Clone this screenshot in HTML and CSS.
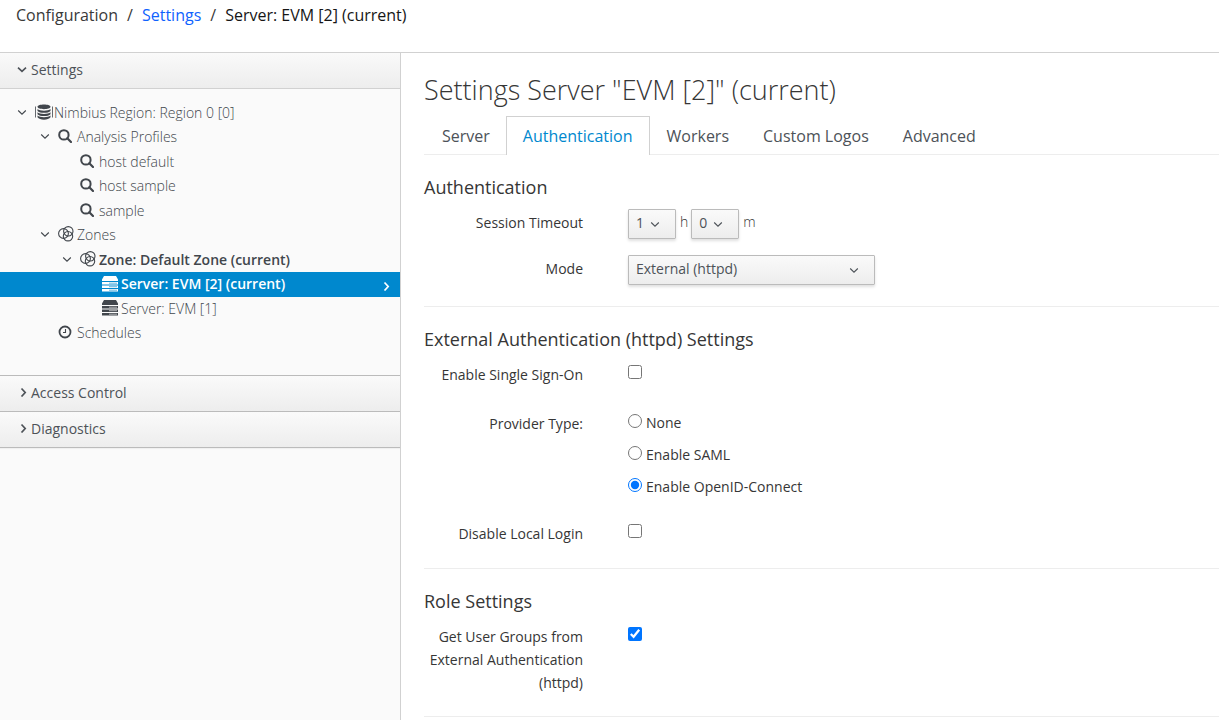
FILE: index.html
```html
<!DOCTYPE html>
<html lang="en">
<head>
<meta charset="utf-8">
<title>Settings Server</title>
<link rel="stylesheet" href="styles.css">
</head>
<body>
<svg class="defs" aria-hidden="true">
  <symbol id="down" viewBox="0 0 10 10"><path d="M1.200 3.500 5 7.200 8.800 3.500" fill="none" stroke="currentColor" stroke-width="1.100"/></symbol>
  <symbol id="down-bold" viewBox="0 0 10 10"><path d="M1 3.600 5 7.400 9 3.600" fill="none" stroke="currentColor" stroke-width="1.600"/></symbol>
  <symbol id="right" viewBox="0 0 10 10"><path d="M3.500 1.500 7.200 5.500 3.500 9.500" fill="none" stroke="currentColor" stroke-width="1.700"/></symbol>
  <symbol id="search" viewBox="0 0 14 14"><circle cx="5.900" cy="5.900" r="4.700" fill="none" stroke="currentColor" stroke-width="2"/><path d="m9.300 9.300 3.700 3.700" stroke="currentColor" stroke-width="2.200" stroke-linecap="round"/></symbol>
  <symbol id="region" viewBox="0 0 18 16"><path d="M.5 2.500v11M17.500 2.500v11" stroke="currentColor" stroke-width="1" opacity=".8"/><path d="M2.500 2.800C2.500-.4 15.500-.4 15.500 2.800S2.500 6 2.500 2.800M2.500 5c2 2.200 11 2.200 13 0v1.900c-2 2.500-11 2.500-13 0zM2.500 8.300c2 2.200 11 2.200 13 0v1.900c-2 2.500-11 2.500-13 0zM2.500 11.600c2 2.200 11 2.200 13 0v1.700c-2 3.200-11 3.200-13 0z" fill="currentColor"/></symbol>
  <symbol id="zone" viewBox="0 0 16 16"><g fill="none" stroke="currentColor" stroke-width="1.100"><circle cx="5.500" cy="7.500" r="4.900"/><circle cx="10.300" cy="5.300" r="4.700"/><circle cx="10" cy="10.200" r="4.700"/></g></symbol>
  <symbol id="server" viewBox="0 0 16 16"><path d="M2 0h12l2 3.500V5H0V3.500zM0 6h16v2.500H0zM0 9.500h16V12H0zM0 13h16v2.500H0z" fill="currentColor"/><path d="M7 7.200h8M7 10.700h8M7 14.200h8" stroke="var(--slot)" stroke-width="1" opacity=".6"/></symbol>
  <symbol id="clock" viewBox="0 0 14 14"><circle cx="7" cy="7" r="5.500" fill="none" stroke="currentColor" stroke-width="1.800"/><path d="M7.500 4v3.500H5" fill="none" stroke="currentColor" stroke-width="1.100"/></symbol>
</svg>

<nav class="breadcrumb" aria-label="Breadcrumb">
  <span>Configuration</span><span class="sep">/</span><a href="#">Settings</a><span class="sep">/</span><span class="here">Server: EVM [2] (current)</span>
</nav>

<div class="layout">
  <aside class="sidebar">
    <button class="panel-head first" type="button" aria-expanded="true"><svg class="caret"><use href="#down-bold"/></svg>Settings</button>
    <ul class="tree">
      <li class="node l1"><svg class="caret"><use href="#down"/></svg><svg class="icon wide"><use href="#region"/></svg>Nimbius Region: Region 0 [0]</li>
      <li class="node l2"><svg class="caret"><use href="#down"/></svg><svg class="icon"><use href="#search"/></svg>Analysis Profiles</li>
      <li class="node l3"><span class="caret"></span><svg class="icon"><use href="#search"/></svg>host default</li>
      <li class="node l3"><span class="caret"></span><svg class="icon"><use href="#search"/></svg>host sample</li>
      <li class="node l3"><span class="caret"></span><svg class="icon"><use href="#search"/></svg>sample</li>
      <li class="node l2"><svg class="caret"><use href="#down"/></svg><svg class="icon big"><use href="#zone"/></svg>Zones</li>
      <li class="node l3 strong"><svg class="caret"><use href="#down"/></svg><svg class="icon big"><use href="#zone"/></svg>Zone: Default Zone (current)</li>
      <li class="node l4 strong selected"><span class="caret"></span><svg class="icon big"><use href="#server"/></svg>Server: EVM [2] (current)<svg class="caret go"><use href="#right"/></svg></li>
      <li class="node l4"><span class="caret"></span><svg class="icon big"><use href="#server"/></svg>Server: EVM [1]</li>
      <li class="node l2"><span class="caret"></span><svg class="icon"><use href="#clock"/></svg>Schedules</li>
    </ul>
    <button class="panel-head closed" type="button"><svg class="caret"><use href="#right"/></svg>Access Control</button>
    <button class="panel-head closed last" type="button"><svg class="caret"><use href="#right"/></svg>Diagnostics</button>
  </aside>

  <main class="content">
    <h1>Settings Server "EVM [2]" (current)</h1>
    <div class="tabs">
      <a href="#" class="tab">Server</a>
      <a href="#" class="tab active">Authentication</a>
      <a href="#" class="tab">Workers</a>
      <a href="#" class="tab">Custom Logos</a>
      <a href="#" class="tab">Advanced</a>
    </div>

    <form>
      <section>
        <h3>Authentication</h3>
        <div class="rows tight">
          <div class="row">
            <label class="name" for="hours">Session Timeout</label>
            <div class="field timeout">
              <span class="select short"><select id="hours"><option>1</option></select><svg class="caret"><use href="#down"/></svg></span>
              <span class="unit">h</span>
              <span class="select short"><select aria-label="Minutes"><option>0</option></select><svg class="caret"><use href="#down"/></svg></span>
              <span class="unit">m</span>
            </div>
          </div>
          <div class="row">
            <label class="name" for="mode">Mode</label>
            <div class="field"><span class="select long"><select id="mode"><option>External (httpd)</option></select><svg class="caret"><use href="#down"/></svg></span></div>
          </div>
        </div>
      </section>

      <section>
        <h3>External Authentication (httpd) Settings</h3>
        <div class="rows">
          <div class="row">
            <label class="name" for="sso">Enable Single Sign-On</label>
            <div class="field"><input type="checkbox" id="sso"></div>
          </div>
          <div class="row" role="radiogroup" aria-labelledby="provider">
            <span class="name" id="provider">Provider Type:</span>
            <div class="field radios">
              <label><input type="radio" name="provider">None</label>
              <label><input type="radio" name="provider">Enable SAML</label>
              <label><input type="radio" name="provider" checked>Enable OpenID-Connect</label>
            </div>
          </div>
          <div class="row">
            <label class="name" for="local">Disable Local Login</label>
            <div class="field"><input type="checkbox" id="local"></div>
          </div>
        </div>
      </section>

      <section>
        <h3>Role Settings</h3>
        <div class="rows">
          <div class="row">
            <label class="name" for="groups">Get User Groups from External Authentication (httpd)</label>
            <div class="field"><input type="checkbox" id="groups" checked></div>
          </div>
        </div>
      </section>
    </form>
  </main>
</div>
</body>
</html>
```
FILE: styles.css
```css
* { box-sizing: border-box; }

body {
  margin: 0;
  height: 100vh;
  overflow: hidden;
  display: flex;
  flex-direction: column;
  background: #fff;
  color: #363636;
  font: 300 14px/23px "Open Sans", sans-serif;
}

.defs { position: absolute; width: 0; height: 0; }

a { text-decoration: none; }

button, select { font: inherit; color: inherit; }

.breadcrumb {
  flex: none;
  height: 52px;
  padding: 4px 16px;
  font-size: 16px;
  font-weight: 400;
  color: #393939;
}
.breadcrumb a { color: #0f62fe; }
.breadcrumb .sep { padding: 0 9px; }
.breadcrumb .here { color: #161616; }

.layout {
  flex: 1;
  min-height: 0;
  display: flex;
  border-top: 1px solid #d1d1d1;
}

.sidebar {
  flex: 0 0 401px;
  background: #fafafa;
  border-right: 1px solid #d1d1d1;
}

.caret { flex: none; width: 10px; height: 10px; }

.panel-head {
  display: flex;
  align-items: center;
  gap: 4px;
  width: 100%;
  height: 36px;
  padding: 0 17px 3px;
  border: 0;
  border-top: 1px solid #bbb;
  background: linear-gradient(#fafafa, #ededed);
  color: #4d5258;
  font-weight: 500;
}
.panel-head.first { border-top: 0; border-bottom: 1px solid #d1d1d1; }
.panel-head.closed { gap: 3px; padding-left: 18px; }
.panel-head.last { height: 37px; border-bottom: 1px solid #bbb; box-shadow: 0 1px 1px #0000000a; }

.tree {
  margin: 0;
  padding: 12px 0 29px;
  list-style: none;
  color: #41464c;
}
.node {
  display: flex;
  align-items: center;
  height: 24px;
  padding-bottom: 2px;
  --slot: #fafafa;
}
.node:nth-child(even) { margin-bottom: 1px; }
.l1 { padding-left: 17px; }
.l2 { padding-left: 40px; }
.l3 { padding-left: 62px; }
.l4 { padding-left: 84px; }
.icon { flex: none; width: 14px; height: 14px; margin: 0 5px 0 8px; }
.icon.wide { width: 18px; height: 16px; margin: 0 1px 0 8px; }
.icon.big { width: 16px; height: 16px; margin: 0 3px 0 8px; }
.strong { font-weight: 600; }
.node.selected { height: 25px; margin: 0; background: #0088ce; color: #fff; --slot: #0088ce; }
.go { margin: 4px 9px 0 auto; }

.content {
  flex: 1;
  min-width: 0;
  padding: 20px 0 0 23px;
}

h1 {
  margin: 0;
  font-size: 27px;
  font-weight: 300;
  line-height: 34px;
}

.tabs {
  display: flex;
  height: 39px;
  margin-top: 9px;
  border-bottom: 1px solid #ededed;
}
.tab {
  height: 39px;
  padding: 7px 16px;
  border: 1px solid transparent;
  border-bottom: 0;
  font-size: 16px;
  font-weight: 400;
  line-height: 24px;
  color: #4d5258;
}
.tab:first-child { padding-left: 17px; padding-right: 15px; }
.tab.active { background: #fff; border-color: #d1d1d1; color: #0088ce; }

section { padding: 20px 0; border-bottom: 1px solid #ededed; }

h3 { margin: 0 0 9px; font-size: 18px; font-weight: 400; line-height: 24px; }

.rows { display: flex; flex-direction: column; gap: 20px; }
.rows.tight { gap: 14px; }
.row { display: flex; gap: 45px; min-height: 29px; }
.name { flex: none; width: 159px; padding: 3px 0 2px; text-align: right; font-weight: 500; }
.field { flex: 1; }
.tight .field { padding: 1px 0; }
.timeout { display: flex; gap: 3px; }
.unit { padding: 1px 0 0 1px; }

.select { position: relative; display: block; }
.select select {
  display: block;
  appearance: none;
  width: 100%;
  height: 30px;
  padding: 0 7px 4px;
  border: 1px solid #bbb;
  border-radius: 1px;
  background: linear-gradient(#fafafa, #ededed);
  box-shadow: 0 2px 3px #03030320;
  color: #4d5258;
  font-weight: 500;
}
.select.short { width: 48px; }
.select.long { width: 247px; }
.select .caret { position: absolute; right: 16px; top: 10px; color: #4d5258; pointer-events: none; }

input { display: block; flex: none; width: 14px; height: 14px; margin: 5px 0 0; }
.radios { display: flex; flex-direction: column; gap: 9px; padding: 2px 0 1px; font-weight: 500; }
.radios label { display: flex; gap: 4px; }
.radios input { margin-top: 3px; }
```
